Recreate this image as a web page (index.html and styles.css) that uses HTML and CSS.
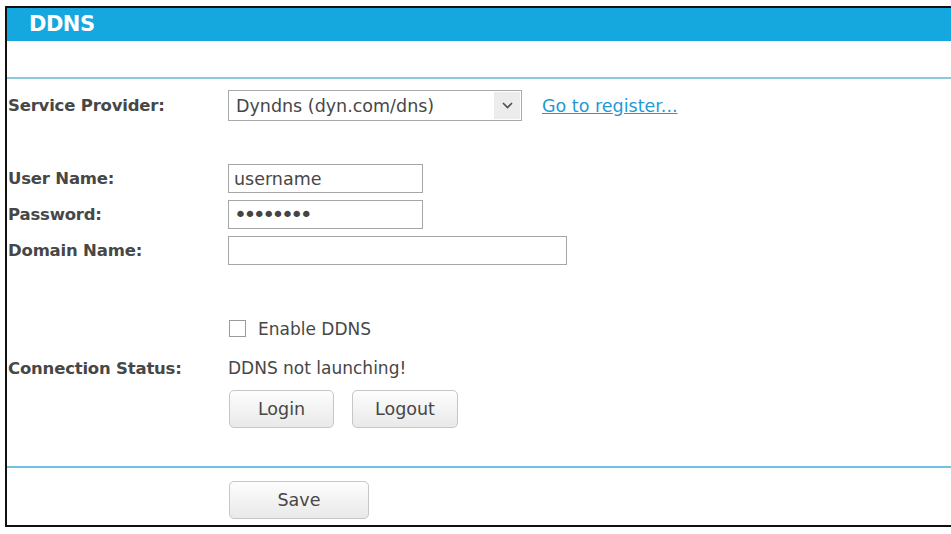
FILE: index.html
```html
<!DOCTYPE html>
<html>
<head>
  <meta charset="utf-8">
  <title>DDNS</title>
  <link rel="stylesheet" href="styles.css">
</head>
<body>
  <div class="panel">
    <h1 class="panel-title">DDNS</h1>
    <div class="spacer"></div>

    <form class="form">
      <div class="row row-provider">
        <label class="label">Service Provider:</label>
        <div class="field">
          <div class="select">
            <span class="select-value">Dyndns (dyn.com/dns)</span>
            <span class="select-arrow">
              <svg width="11" height="7" viewBox="0 0 11 7"><path d="M1 1 L5.5 5.5 L10 1" fill="none" stroke="#505050" stroke-width="1.7"/></svg>
            </span>
          </div>
          <a class="link" href="#">Go to register...</a>
        </div>
      </div>

      <div class="row row-user">
        <label class="label">User Name:</label>
        <div class="field"><input class="input" type="text" value="username"></div>
      </div>
      <div class="row row-pass">
        <label class="label">Password:</label>
        <div class="field"><input class="input" type="password" value="password"></div>
      </div>
      <div class="row row-domain">
        <label class="label">Domain Name:</label>
        <div class="field"><input class="input input-wide" type="text" value=""></div>
      </div>

      <div class="row row-enable">
        <span class="label"></span>
        <div class="field">
          <span class="checkbox"></span>
          <span class="text">Enable DDNS</span>
        </div>
      </div>

      <div class="row row-status">
        <label class="label">Connection Status:</label>
        <div class="field"><span class="text">DDNS not launching!</span></div>
      </div>

      <div class="row row-buttons">
        <span class="label"></span>
        <div class="field">
          <button type="button" class="btn btn-login">Login</button>
          <button type="button" class="btn btn-logout">Logout</button>
        </div>
      </div>
    </form>

    <div class="footer">
      <button type="button" class="btn btn-save">Save</button>
    </div>
  </div>
</body>
</html>
```

FILE: styles.css
```css
body {
  margin: 0;
  background: #fff;
  font-family: "DejaVu Sans", Verdana, sans-serif;
  color: #474747;
}

.panel {
  margin: 6px 0 0 5px;
  border-top: 2px solid #111;
  border-left: 2px solid #111;
  border-bottom: 2px solid #111;
  height: 521px;
  box-sizing: border-box;
}

.panel-title {
  margin: 0;
  height: 33px;
  line-height: 32px;
  background: #15a8de;
  color: #fff;
  font-size: 21px;
  font-weight: bold;
  padding-left: 22px;
  letter-spacing: -0.5px;
}

.spacer {
  height: 36px;
  border-bottom: 2px solid #8fc7df;
}

.form {
  padding-left: 1px;
}

.row {
  display: flex;
  align-items: center;
}

.label {
  width: 220px;
  flex: none;
  font-size: 16.5px;
  font-weight: bold;
  color: #474747;
  letter-spacing: -0.2px;
}

.field {
  display: flex;
  align-items: center;
}

.row-provider { margin-top: 11px; height: 31px; }
.row-user { margin-top: 43px; height: 29px; }
.row-pass { margin-top: 7px; height: 29px; }
.row-domain { margin-top: 7px; height: 29px; }
.row-enable { margin-top: 55px; height: 17px; }
.row-status { margin-top: 22px; height: 18px; }
.row-buttons { margin-top: 13px; height: 38px; }

.select {
  width: 294px;
  height: 31px;
  box-sizing: border-box;
  border: 1px solid #aaa;
  display: flex;
  align-items: center;
  justify-content: space-between;
  padding: 0 1px 0 7px;
  font-size: 17.5px;
  color: #474747;
}

.select-arrow {
  width: 26px;
  height: 27px;
  background: #ececec;
  display: flex;
  align-items: center;
  justify-content: center;
}

.link {
  margin-left: 20px;
  font-size: 17.5px;
  color: #1f9ad6;
}

.input {
  width: 195px;
  height: 29px;
  box-sizing: border-box;
  border: 1px solid #a6a6a6;
  padding: 0 5px;
  font-family: "DejaVu Sans", Verdana, sans-serif;
  font-size: 17.5px;
  color: #474747;
  outline: none;
}

.input[type="password"] {
  font-size: 22px;
  letter-spacing: -3.6px;
  color: #444;
}

.input-wide {
  width: 339px;
}

.checkbox {
  width: 17px;
  height: 17px;
  margin-left: 1px;
  box-sizing: border-box;
  border: 1px solid #9a9a9a;
  background: #fff;
}

.row-enable .text {
  margin-left: 12px;
}

.text {
  font-size: 17px;
  color: #474747;
}

.btn {
  height: 38px;
  box-sizing: border-box;
  border: 1px solid #c6c6c6;
  border-radius: 5px;
  background: linear-gradient(#fdfdfd, #e9e9e9);
  font-family: "DejaVu Sans", Verdana, sans-serif;
  font-size: 17.5px;
  color: #474747;
  padding: 0;
}

.btn-login { width: 105px; margin-left: 1px; }
.btn-logout { width: 106px; margin-left: 18px; }

.footer {
  margin-top: 38px;
  border-top: 2px solid #6fc2e6;
  padding: 13px 0 0 221px;
}

.btn-save { width: 140px; margin-left: 1px; }
```
